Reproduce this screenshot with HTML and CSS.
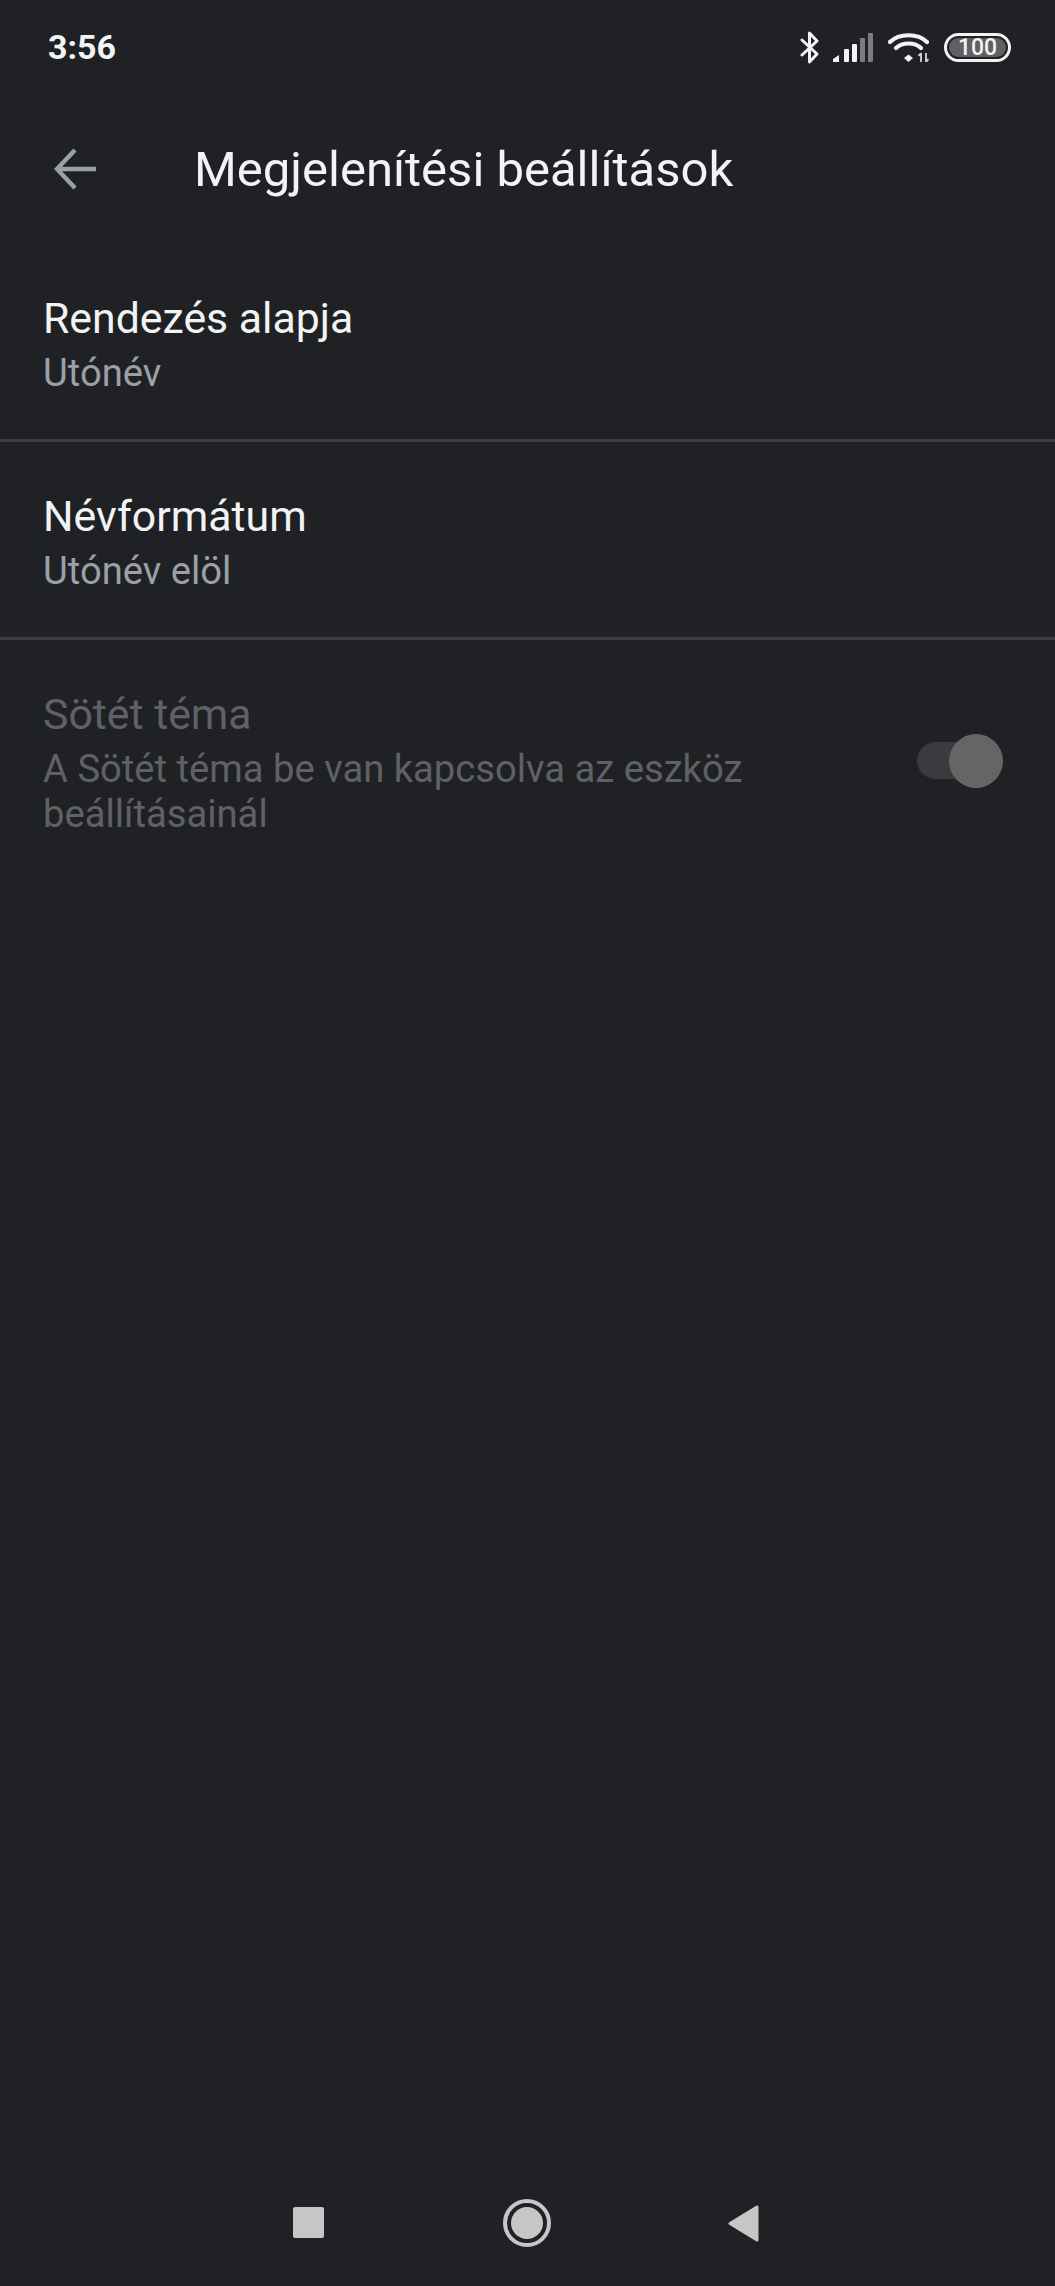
FILE: index.html
```html
<!DOCTYPE html>
<html lang="hu">
<head>
    <meta charset="UTF-8">
    <meta name="viewport" content="width=device-width, initial-scale=1.0">
    <title>Megjelenítési beállítások</title>
    <link rel="stylesheet" href="styles.css">
</head>
<body>
    <div class="screen">
        <div class="status-bar">
            <span class="status-time">3:56</span>
            <div class="status-icons">
                <svg class="icon-bluetooth" width="19" height="33" viewBox="0 0 19 33">
                    <path d="M2 9 L17 23 L9.5 31 L9.5 2 L17 10 L2 24" fill="none" stroke="#f1f3f4" stroke-width="3" stroke-linejoin="round" stroke-linecap="round"/>
                </svg>
                <svg class="icon-signal" width="40" height="29" viewBox="0 0 40 29">
                    <path d="M0 29 V26 L6 22 V29 Z" fill="#f1f3f4"/>
                    <rect x="11" y="16" width="5" height="13" rx="1" fill="#f1f3f4"/>
                    <rect x="19" y="11" width="5" height="18" rx="1" fill="#f1f3f4"/>
                    <rect x="27" y="5" width="5" height="24" rx="1" fill="#7b7c7e"/>
                    <rect x="35" y="0" width="5" height="29" rx="1" fill="#7b7c7e"/>
                </svg>
                <svg class="icon-wifi" width="41" height="30" viewBox="0 0 41 30">
                    <path d="M2 10 C11 1 30 1 39 10" fill="none" stroke="#f1f3f4" stroke-width="4.2" stroke-linecap="round"/>
                    <path d="M8 16 C14 10 27 10 33 16" fill="none" stroke="#f1f3f4" stroke-width="4.2" stroke-linecap="round"/>
                    <path d="M16 26 L20.5 22.5 L25 26 L20.5 30 Z" fill="#f1f3f4"/>
                    <path d="M33 21 V30 M33 21 L30.5 24 M38 30 V21 M38 30 L40.5 27" fill="none" stroke="#d5d6d7" stroke-width="1.8"/>
                </svg>
                <div class="battery"><span class="battery-level">100</span></div>
            </div>
        </div>

        <div class="app-bar">
            <svg class="back-icon" width="44" height="44" viewBox="0 0 44 44">
                <path d="M42 22 H4 M21 3 L3 22 L21 41" fill="none" stroke="#9aa0a6" stroke-width="4.5"/>
            </svg>
            <h1 class="app-title">Megjelenítési beállítások</h1>
        </div>

        <div class="settings-list">
            <div class="setting-row">
                <div class="setting-title">Rendezés alapja</div>
                <div class="setting-value">Utónév</div>
            </div>
            <div class="setting-row">
                <div class="setting-title">Névformátum</div>
                <div class="setting-value">Utónév elöl</div>
            </div>
            <div class="setting-row disabled">
                <div class="setting-text">
                    <div class="setting-title">Sötét téma</div>
                    <div class="setting-value">A Sötét téma be van kapcsolva az eszköz<br>beállításainál</div>
                </div>
                <div class="toggle"><div class="toggle-thumb"></div></div>
            </div>
        </div>

        <div class="nav-bar">
            <div class="nav-square"></div>
            <div class="nav-circle"><div class="nav-circle-dot"></div></div>
            <svg class="nav-back" width="31" height="37" viewBox="0 0 31 37">
                <path d="M29 2 V35 L2 18.5 Z" fill="#c6c6c6" stroke="#c6c6c6" stroke-width="3" stroke-linejoin="round"/>
            </svg>
        </div>
    </div>
</body>
</html>
```
FILE: styles.css
```css
* {
    margin: 0;
    padding: 0;
    box-sizing: border-box;
}

body {
    font-family: Roboto, "Noto Sans", sans-serif;
    background: #202124;
    width: 1055px;
    height: 2286px;
    overflow: hidden;
}

.screen {
    height: 2286px;
    display: flex;
    flex-direction: column;
}

.status-bar {
    height: 94px;
    padding: 0 44px 0 48px;
    display: flex;
    align-items: center;
    justify-content: space-between;
}

.status-time {
    color: #f1f3f4;
    font-size: 34px;
    font-weight: 700;
}

.status-icons {
    display: flex;
    align-items: center;
    gap: 15px;
}

.icon-bluetooth {
    margin-right: -1px;
}

.battery {
    width: 67px;
    height: 29px;
    border: 3px solid #f1f3f4;
    border-radius: 15px;
    padding: 2px;
    display: flex;
}

.battery-level {
    flex: 1;
    background: #5f6061;
    border-radius: 10px;
    color: #f1f3f4;
    font-size: 23px;
    font-weight: 500;
    line-height: 19px;
    text-align: center;
}

.app-bar {
    height: 150px;
    padding-left: 54px;
    display: flex;
    align-items: center;
}

.back-icon {
    margin-right: 96px;
}

.app-title {
    color: #f1f3f4;
    font-size: 49px;
    font-weight: 400;
}

.settings-list {
    flex: 1;
}

.setting-row {
    height: 198px;
    padding: 49px 44px 0 43px;
    border-bottom: 3px solid #3c3e42;
}

.setting-title {
    color: #f1f3f4;
    font-size: 42.8px;
    line-height: 50px;
    margin-bottom: 8px;
}

.setting-value {
    color: #9aa0a6;
    font-size: 38.2px;
    line-height: 45px;
}

.setting-row.disabled {
    height: 240px;
    border-bottom: none;
    display: flex;
    justify-content: space-between;
    align-items: flex-start;
    padding-right: 60px;
}

.disabled .setting-title,
.disabled .setting-value {
    color: #5f6165;
}

.toggle {
    width: 78px;
    height: 37px;
    margin-top: 53px;
    background: #3a3b3e;
    border-radius: 19px;
    position: relative;
}

.toggle-thumb {
    position: absolute;
    top: -8px;
    right: -8px;
    width: 54px;
    height: 54px;
    background: #656565;
    border-radius: 50%;
}

.nav-bar {
    height: 126px;
    padding: 0 296px 0 293px;
    display: flex;
    align-items: flex-start;
    justify-content: space-between;
}

.nav-square {
    width: 31px;
    height: 31px;
    margin-top: 47px;
    background: #c6c6c6;
    border-radius: 2px;
}

.nav-circle {
    width: 48px;
    height: 48px;
    margin-top: 39px;
    margin-left: 2px;
    border: 4px solid #c6c6c6;
    border-radius: 50%;
    display: flex;
    align-items: center;
    justify-content: center;
}

.nav-circle-dot {
    width: 32px;
    height: 32px;
    background: #c6c6c6;
    border-radius: 50%;
}

.nav-back {
    margin-top: 45px;
}
```
